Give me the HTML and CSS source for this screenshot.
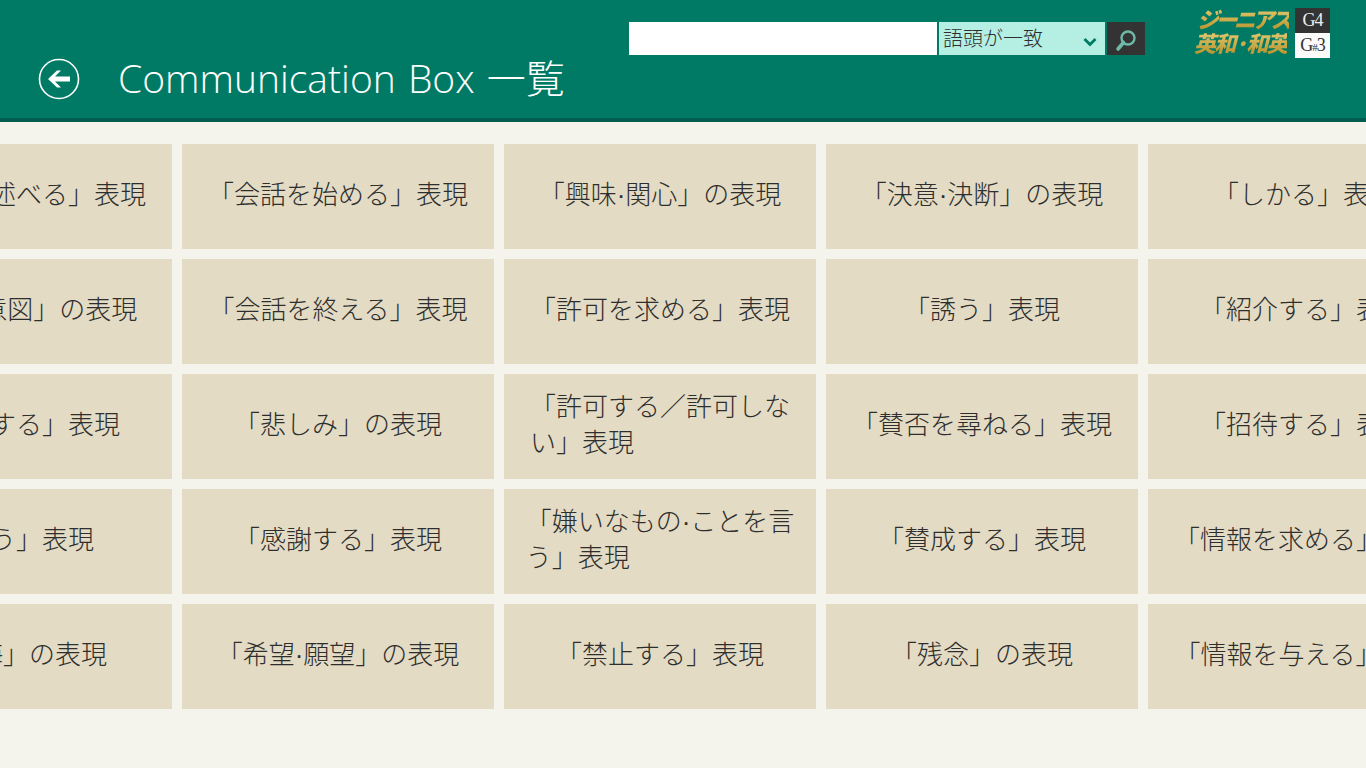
FILE: index.html
```html
<!DOCTYPE html>
<html>

<head>
    <title>Communication Box 一覧</title>
    <link rel="stylesheet" href="styles.css">
</head>

<body>

    <!-- Header -->
    <div class="header">
        <div class="title-row">
            <div class="back-button">
                <svg width="42" height="42" viewBox="0 0 42 42">
                    <circle cx="21" cy="21" r="19.5" fill="none" stroke="#fff" stroke-width="1.6"></circle>
                    <path d="M10 21 L19 12.5 H23 L17 18.5 H32 V23.5 H17 L23 29.5 H19 Z" fill="#fff"></path>
                </svg>
            </div>
            <h1 class="page-title">Communication Box 一覧</h1>
        </div>
        <div class="search">
            <input class="search-input" type="text">
            <div class="search-mode">
                <span>語頭が一致</span>
                <svg class="chevron" width="14" height="10" viewBox="0 0 14 10">
                    <path d="M1.5 2 L7 7.5 L12.5 2" fill="none" stroke="#007a65" stroke-width="2.8"></path>
                </svg>
            </div>
            <div class="search-button">
                <svg width="26" height="26" viewBox="0 0 26 26">
                    <circle cx="15" cy="12" r="6.5" fill="none" stroke="#6fb9a8" stroke-width="2.4"></circle>
                    <path d="M10.5 16.5 L5 23" fill="none" stroke="#6fb9a8" stroke-width="3.6" stroke-linecap="round"></path>
                </svg>
            </div>
        </div>
        <div class="logo">
            <div class="logo-text">
                <div class="logo-top">ジーニアス</div>
                <div class="logo-bottom">英和·和英</div>
            </div>
            <div class="editions">
                <div class="edition dark">G4</div>
                <div class="edition light">G<small>#</small>3</div>
            </div>
        </div>
    </div>

    <!-- Expression list -->
    <div class="list">
        <div class="tile"><span>「意見を述べる」表現</span></div>
        <div class="tile"><span>「意志<i>·</i>意図」の表現</span></div>
        <div class="tile"><span>「同意する」表現</span></div>
        <div class="tile"><span>「祝う」表現</span></div>
        <div class="tile"><span>「後悔」の表現</span></div>

        <div class="tile"><span>「会話を始める」表現</span></div>
        <div class="tile"><span>「会話を終える」表現</span></div>
        <div class="tile"><span>「悲しみ」の表現</span></div>
        <div class="tile"><span>「感謝する」表現</span></div>
        <div class="tile"><span>「希望<i>·</i>願望」の表現</span></div>

        <div class="tile"><span>「興味<i>·</i>関心」の表現</span></div>
        <div class="tile"><span>「許可を求める」表現</span></div>
        <div class="tile"><span>「許可する／許可しな<br>い」表現</span></div>
        <div class="tile"><span>「嫌いなもの<i>·</i>ことを言<br>う」表現</span></div>
        <div class="tile"><span>「禁止する」表現</span></div>

        <div class="tile"><span>「決意<i>·</i>決断」の表現</span></div>
        <div class="tile"><span>「誘う」表現</span></div>
        <div class="tile"><span>「賛否を尋ねる」表現</span></div>
        <div class="tile"><span>「賛成する」表現</span></div>
        <div class="tile"><span>「残念」の表現</span></div>

        <div class="tile"><span>「しかる」表現</span></div>
        <div class="tile"><span>「紹介する」表現</span></div>
        <div class="tile"><span>「招待する」表現</span></div>
        <div class="tile"><span>「情報を求める」表現</span></div>
        <div class="tile"><span>「情報を与える」表現</span></div>
    </div>

</body>

</html>
```

FILE: styles.css
```css
html,
body {
    margin: 0;
    height: 100%;
    overflow: hidden;
}

body {
    background-color: #f4f3ec;
    color: #2e2e2e;
    font-family: "Noto Sans CJK JP", "Noto Sans", sans-serif;
}

/* Header */
.header {
    display: flex;
    justify-content: space-between;
    height: 118px;
    background-color: #007a65;
    border-bottom: 4px solid #005c4f;
    padding-left: 38px;
    padding-right: 36px;
}

.title-row {
    display: flex;
    align-items: center;
    gap: 38px;
    margin-top: 56px;
    height: 46px;
}

.back-button {
    width: 42px;
    height: 42px;
}

.page-title {
    margin: 0;
    padding-bottom: 7px;
    color: #fff;
    font-family: "Open Sans", "Noto Sans CJK JP", sans-serif;
    font-size: 39px;
    font-weight: 300;
    word-spacing: 2px;
    white-space: nowrap;
}

/* Search */
.search {
    display: flex;
    gap: 2px;
    margin-top: 22px;
    margin-left: auto;
    height: 33px;
}

.search-input {
    box-sizing: border-box;
    width: 308px;
    height: 33px;
    border: 0;
    padding: 0 6px;
    background-color: #fff;
}

.search-mode {
    display: flex;
    align-items: center;
    justify-content: space-between;
    box-sizing: border-box;
    width: 166px;
    padding: 0 8px 2px 4px;
    background-color: #b5efe3;
    font-size: 20px;
    font-weight: 300;
}

.chevron {
    margin-top: 8px;
}

.search-button {
    display: flex;
    align-items: center;
    justify-content: center;
    width: 38px;
    background-color: #333;
}

/* Logo */
.logo {
    display: flex;
    margin-top: 8px;
    margin-left: 51px;
    height: 50px;
}

.logo-text {
    width: 99px;
    margin-top: -2px;
    font-weight: 900;
    font-style: italic;
    line-height: 24px;
    white-space: nowrap;
}

.logo-top,
.logo-bottom {
    width: fit-content;
    background: linear-gradient(#e6cd74, #b8952f);
    -webkit-background-clip: text;
    background-clip: text;
    color: transparent;
}

.logo-top {
    margin-left: 1px;
    font-size: 22px;
    letter-spacing: -3.6px;
}

.logo-bottom {
    margin-left: -2px;
    font-size: 22px;
    letter-spacing: -1.7px;
}

.edition {
    width: 35px;
    height: 25px;
    line-height: 24px;
    font-family: "Liberation Serif", serif;
    font-size: 18px;
    letter-spacing: -1px;
    text-align: center;
}

.edition small {
    font-size: 11px;
}

.edition.dark {
    background-color: #333;
    color: #eee;
}

.edition.light {
    background-color: #fafafa;
    color: #333;
}

/* Expression list */
.list {
    display: grid;
    grid-template-columns: repeat(5, 312px);
    grid-template-rows: repeat(5, 105px);
    grid-auto-flow: column;
    gap: 10px;
    margin-top: 22px;
    margin-left: -140px;
}

.tile {
    display: flex;
    align-items: center;
    justify-content: center;
    box-sizing: border-box;
    padding-bottom: 7px;
    background-color: #e3dbc3;
    font-size: 26px;
    font-weight: 300;
    line-height: 36px;
    white-space: nowrap;
}

/* narrow latin dot, the CJK one is too wide */
.tile i {
    font-family: "Liberation Sans", sans-serif;
    font-style: normal;
    line-height: 0;
}
```
